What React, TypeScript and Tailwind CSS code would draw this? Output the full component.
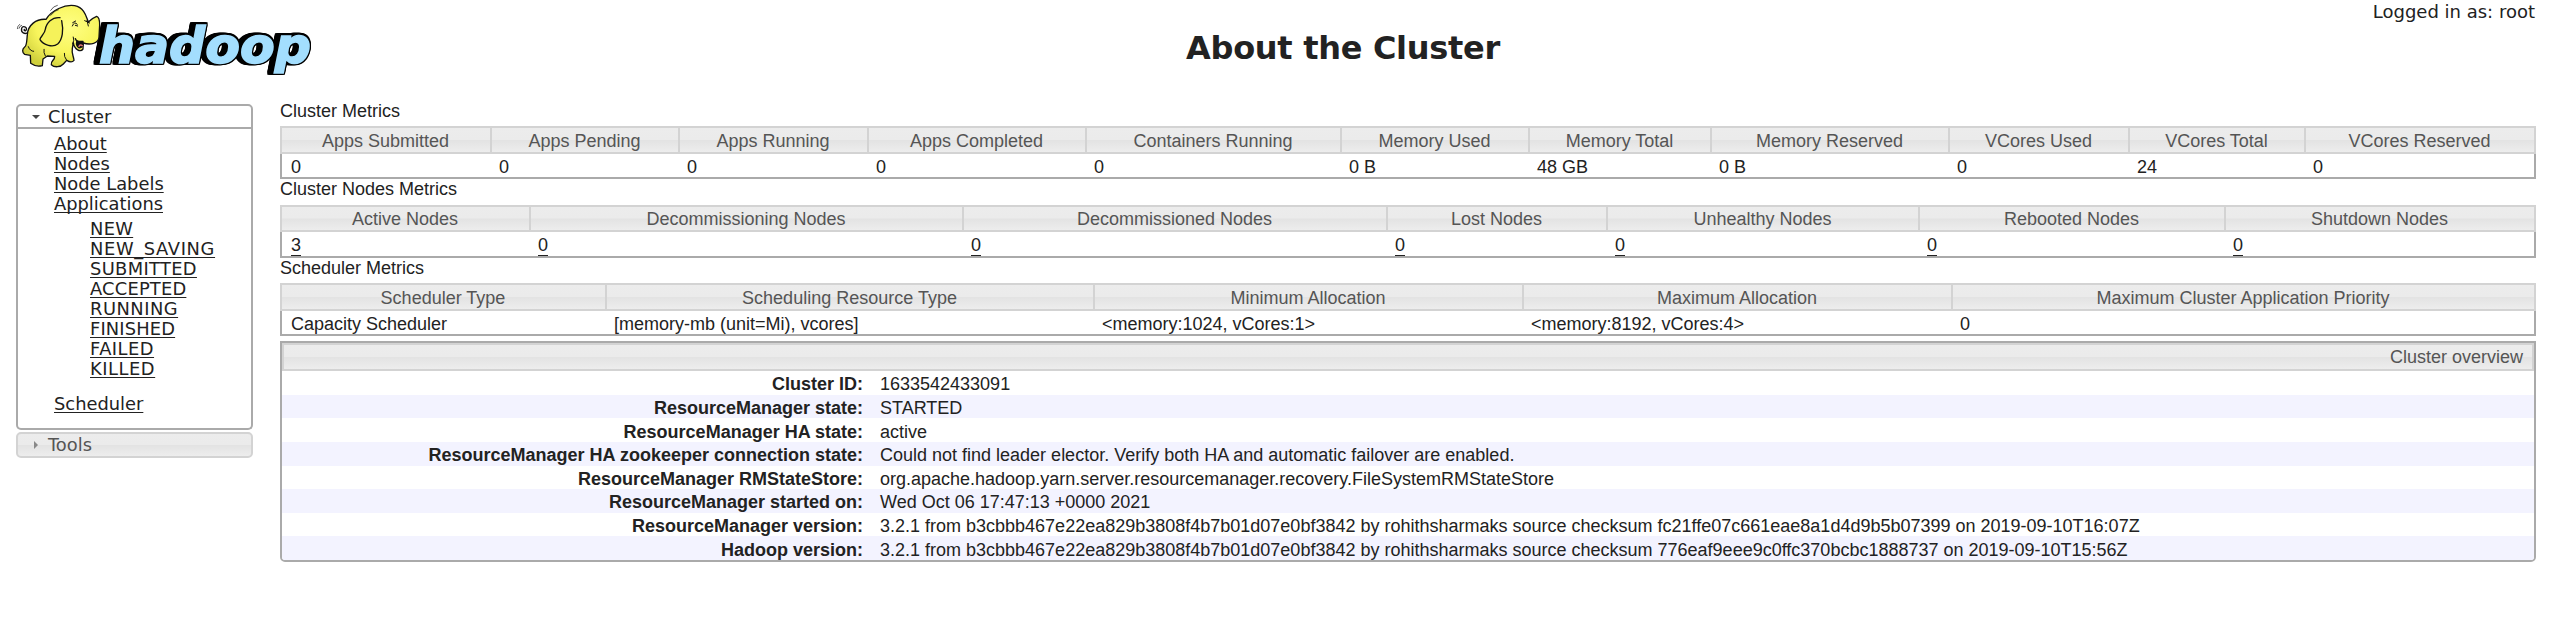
import React from "react";

const heads = "bg-[linear-gradient(to_bottom,#ececec_0%,#ebebeb_48%,#e3e3e3_52%,#ededed_100%)] text-[#555]";

type Metric = { cols: number[]; names: string[]; values: string[]; link?: boolean; hh: string; bh: string };

function MetricTable({ cols, names, values, link, hh, bh }: Metric) {
  const template = { gridTemplateColumns: cols.map((c) => c + "px").join(" ") };
  return (
    <div className="w-[2256px]">
      <div className={"grid border-2 border-[#d3d3d3] " + heads + " " + hh} style={template}>
        {names.map((n, i) => (
          <div key={n} className={"flex items-center justify-center whitespace-nowrap pr-px pt-px " + (i ? "border-l-2 border-[#d3d3d3]" : "")}>
            <span>{n}</span>
          </div>
        ))}
      </div>
      <div className={"grid border-x-2 border-b-2 border-[#aaa] bg-white " + bh} style={template}>
        {values.map((v, i) => (
          <div key={i} className="flex items-center whitespace-nowrap pl-[9px] pt-[3px]">
            <span className={link ? "h-[20px] border-b border-[#222] leading-[19px]" : ""}>{v}</span>
          </div>
        ))}
      </div>
    </div>
  );
}

const overview: [string, string][] = [
  ["Cluster ID:", "1633542433091"],
  ["ResourceManager state:", "STARTED"],
  ["ResourceManager HA state:", "active"],
  ["ResourceManager HA zookeeper connection state:", "Could not find leader elector. Verify both HA and automatic failover are enabled."],
  ["ResourceManager RMStateStore:", "org.apache.hadoop.yarn.server.resourcemanager.recovery.FileSystemRMStateStore"],
  ["ResourceManager started on:", "Wed Oct 06 17:47:13 +0000 2021"],
  ["ResourceManager version:", "3.2.1 from b3cbbb467e22ea829b3808f4b7b01d07e0bf3842 by rohithsharmaks source checksum fc21ffe07c661eae8a1d4d9b5b07399 on 2019-09-10T16:07Z"],
  ["Hadoop version:", "3.2.1 from b3cbbb467e22ea829b3808f4b7b01d07e0bf3842 by rohithsharmaks source checksum 776eaf9eee9c0ffc370bcbc1888737 on 2019-09-10T15:56Z"],
];

const states: [string, string][] = [
  ["NEW", "tracking-[0.3px]"],
  ["NEW_SAVING", "tracking-[0.65px]"],
  ["SUBMITTED", "tracking-[0.35px]"],
  ["ACCEPTED", "tracking-[0.2px]"],
  ["RUNNING", "tracking-[0.5px]"],
  ["FINISHED", "tracking-[0.15px]"],
  ["FAILED", "tracking-[0.5px]"],
  ["KILLED", "tracking-[0.55px]"],
];

function NavLink({ children, spacing = "" }: { children: string; spacing?: string }) {
  return (
    <a className={"block h-5 w-fit whitespace-nowrap leading-5 underline decoration-1 underline-offset-2 [text-decoration-skip-ink:none] " + spacing}>{children}</a>
  );
}

function Logo() {
  return (
    <svg width="330" height="90" viewBox="0 0 330 90" aria-hidden="true">
      <defs>
        <radialGradient id="skin" cx="0.6" cy="0.35" r="0.7">
          <stop offset="0" stopColor="#ffff85" />
          <stop offset="0.6" stopColor="#f8f55c" />
          <stop offset="1" stopColor="#cfcf3c" />
        </radialGradient>
      </defs>
      <text
        x="99" y="62.5" textLength="212" lengthAdjust="spacingAndGlyphs"
        fill="#a3defe" stroke="#a3defe" strokeWidth="1.6" strokeLinejoin="miter"
        className="font-['DejaVu_Sans',Verdana,sans-serif] text-[50px] font-bold italic [filter:drop-shadow(1.5px_0_0_#000)_drop-shadow(-1.5px_0_0_#000)_drop-shadow(0_1.5px_0_#000)_drop-shadow(0_-1.5px_0_#000)_drop-shadow(-4px_0_0_#000)]"
      >
        hadoop
      </text>
      <g transform="translate(10 0) scale(0.3333)" stroke="#111" strokeWidth="4" strokeLinecap="round" strokeLinejoin="round" fill="none">
        <path d="M56 96C44 106 32 97 35 85C38 76 52 81 49 89C46 95 41 92 43 88" />
        <path fill="url(#skin)" d="M108 58C78 56 54 75 52 104C50 122 51 137 44 141C36 147 36 158 44 163L61 166L62 190Q78 202 97 197L99 177L112 168L134 169C135 181 121 183 124 194C134 204 152 201 160 192L170 181Q185 190 192 181C191 168 184 161 187 145L190 128C193 150 212 157 219 147L220 129C241 136 266 130 267 112L269 75Q269 51 260 49Q247 54 235 66C229 53 226 24 194 17C165 12 124 31 108 58Z" />
        <path fill="#f5f25a" d="M150 53C126 50 109 69 106 88C105 103 88 112 90 119C100 136 129 143 143 132C158 119 161 90 155 62" />
        <path d="M187 78Q193 62 202 73M188 68L197 63M196 76L203 78M224 62L239 69M231 61L235 78" strokeWidth="3" />
        <path fill="#111" d="M196 116Q199 126 219 124Q221 145 206 143Q196 135 201 125Z" />
        <path d="M207 139Q211 132 217 137" stroke="#e87878" strokeWidth="4" />
        <path d="M55 140Q60 154 71 154M106 168Q100 158 102 148M170 181Q161 169 163 160M188 132Q194 120 190 111" strokeWidth="3" />
        <path d="M122 46Q136 30 145 29M122 31Q130 18 142 16M35 76Q29 77 27 85M29 73Q22 78 22 86" strokeWidth="2" />
      </g>
    </svg>
  );
}

export default function App() {
  return (
    <div className="h-[640px] w-[2550px] overflow-hidden bg-white font-['Liberation_Sans',Arial,sans-serif] text-[18px] leading-5 text-[#222]">
      <header className="flex h-[104px] items-start font-['DejaVu_Sans',Verdana,sans-serif]">
        <div className="w-[330px]"><Logo /></div>
        <h1 className="flex-1 pl-[136px] pt-[28px] text-center text-[32px] font-bold leading-10 tracking-[-0.3px]">About the Cluster</h1>
        <div className="w-[330px] pr-[15px] pt-[2px] text-right">Logged in as: root</div>
      </header>
      <div className="flex">
        <nav className="ml-4 w-[237px] font-['DejaVu_Sans',Verdana,sans-serif] text-[17.85px]">
          <div className="flex h-[25px] items-center rounded-t-[5px] border-2 border-[#aaa] pl-[14px]">
            <span className="mr-[8px] h-0 w-0 border-x-4 border-t-4 border-x-transparent border-t-[#454545]" />
            <span>Cluster</span>
          </div>
          <div className="h-[301px] rounded-b-[5px] border-2 border-t-0 border-[#aaa] pl-[36px] pt-[5px]">
            {["About", "Nodes", "Node Labels", "Applications"].map((t) => <NavLink key={t}>{t}</NavLink>)}
            <div className="py-[5px] pl-9">
              {states.map(([t, s]) => <NavLink key={t} spacing={s}>{t}</NavLink>)}
            </div>
            <div className="pt-[10px]"><NavLink>Scheduler</NavLink></div>
          </div>
          <div className={"mt-[2px] flex h-[26px] items-center rounded-[5px] border-2 border-[#d3d3d3] pl-[16px] " + heads}>
            <span className="mr-[10px] h-0 w-0 border-y-4 border-l-4 border-y-transparent border-l-[#888]" />
            <span>Tools</span>
          </div>
        </nav>
        <main className="ml-[27px] w-[2256px]">
          <div className="h-[22px] leading-[14px]">Cluster Metrics</div>
          <MetricTable cols={[208, 188, 189, 218, 255, 188, 182, 238, 180, 176, 230]} hh="h-[28px]" bh="h-[25px]"
            names={["Apps Submitted", "Apps Pending", "Apps Running", "Apps Completed", "Containers Running", "Memory Used", "Memory Total", "Memory Reserved", "VCores Used", "VCores Total", "VCores Reserved"]}
            values={["0", "0", "0", "0", "0", "0 B", "48 GB", "0 B", "0", "24", "0"]} />
          <div className="h-[26px] leading-5">Cluster Nodes Metrics</div>
          <MetricTable link cols={[247, 433, 424, 220, 312, 306, 310]} hh="h-[27px]" bh="h-[26px]"
            names={["Active Nodes", "Decommissioning Nodes", "Decommissioned Nodes", "Lost Nodes", "Unhealthy Nodes", "Rebooted Nodes", "Shutdown Nodes"]}
            values={["3", "0", "0", "0", "0", "0", "0"]} />
          <div className="h-[25px] leading-5">Scheduler Metrics</div>
          <MetricTable cols={[323, 488, 429, 429, 583]} hh="h-[28px]" bh="h-[25px]"
            names={["Scheduler Type", "Scheduling Resource Type", "Minimum Allocation", "Maximum Allocation", "Maximum Cluster Application Priority"]}
            values={["Capacity Scheduler", "[memory-mb (unit=Mi), vcores]", "<memory:1024, vCores:1>", "<memory:8192, vCores:4>", "0"]} />
          <section className="mt-[5px] overflow-hidden rounded-b-[5px] border-2 border-[#aaa]">
            <div className={"flex h-[28px] items-center justify-end border-2 border-[#d3d3d3] pr-[9px] " + heads}>Cluster overview</div>
            <div className="grid h-[189px] grid-rows-8">
              {overview.map(([k, v], i) => (
                <div key={k} className={"flex items-center whitespace-nowrap pt-[3px] " + (i % 2 ? "bg-[#f3f3ff]" : "bg-white")}>
                  <div className="w-[581px] text-right font-bold">{k}</div>
                  <div className="pl-[17px]">{v}</div>
                </div>
              ))}
            </div>
          </section>
        </main>
      </div>
    </div>
  );
}
